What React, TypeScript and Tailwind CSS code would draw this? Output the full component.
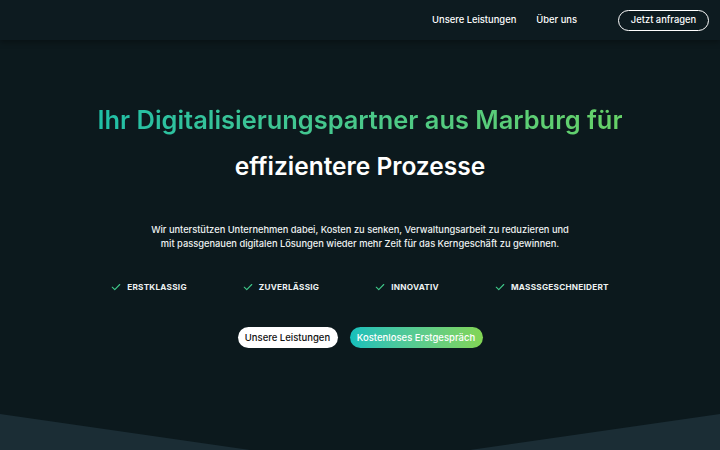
import React from "react";

const Check = () => (
  <svg width="10" height="10" viewBox="0 0 24 24" fill="none" stroke="#3fc98a" strokeWidth="2.6" strokeLinecap="round" strokeLinejoin="round">
    <path d="M3 12.5l6 6L21 6" />
  </svg>
);

export default function App() {
  const font = { fontFamily: "Inter, 'Noto Sans', sans-serif" };
  const features = ["ERSTKLASSIG", "ZUVERLÄSSIG", "INNOVATIV", "MASSSGESCHNEIDERT"];
  return (
    <div className="w-[720px] h-[450px] bg-[#0c191d] flex flex-col overflow-hidden text-white" style={font}>
      <header className="h-[40px] bg-[#0d1b20] shadow-[0_2px_6px_rgba(0,0,0,0.35)] flex items-center justify-end pr-[11px] shrink-0 relative z-10">
        <nav className="flex items-center text-[9.4px] font-medium text-white">
          <span className="mr-[20px]">Unsere Leistungen</span>
          <span className="mr-[41px]">Über uns</span>
          <span className="h-[21px] w-[91px] rounded-full border border-white flex items-center justify-center">Jetzt anfragen</span>
        </nav>
      </header>
      <main className="flex-1 flex flex-col items-center">
        <h1 className="mt-[62px] text-[25.4px] font-semibold leading-[36px] bg-gradient-to-r from-[#1fbfa6] to-[#66d167] bg-clip-text text-transparent">
          Ihr Digitalisierungspartner aus Marburg für
        </h1>
        <h2 className="mt-[10px] text-[24.5px] font-semibold leading-[36px] text-white">effizientere Prozesse</h2>
        <p className="mt-[39px] text-[9.3px] font-medium leading-[14px] text-center text-[#eef2f2]">
          Wir unterstützen Unternehmen dabei, Kosten zu senken, Verwaltungsarbeit zu reduzieren und
          <br />
          mit passgenauen digitalen Lösungen wieder mehr Zeit für das Kerngeschäft zu gewinnen.
        </p>
        <div className="mt-[30px] flex items-center gap-[56px]">
          {features.map((f) => (
            <div key={f} className="flex items-center gap-[6px]">
              <Check />
              <span className="text-[8.2px] font-bold tracking-[0.25px] text-[#eef2f2]">{f}</span>
            </div>
          ))}
        </div>
        <div className="mt-[34px] flex items-center gap-[12px]">
          <span className="h-[21px] w-[100px] rounded-full bg-white text-[#111] text-[9.5px] font-medium flex items-center justify-center">Unsere Leistungen</span>
          <span className="h-[21px] w-[133px] rounded-full bg-gradient-to-r from-[#12bfbb] to-[#82d553] text-white text-[9.5px] font-medium flex items-center justify-center">Kostenloses Erstgespräch</span>
        </div>
      </main>
      <svg width="720" height="36" viewBox="0 0 720 36" className="block shrink-0">
        <polygon points="0,0 250,36 470,36 720,0 720,36 0,36" fill="#1b2d35" />
      </svg>
    </div>
  );
}
